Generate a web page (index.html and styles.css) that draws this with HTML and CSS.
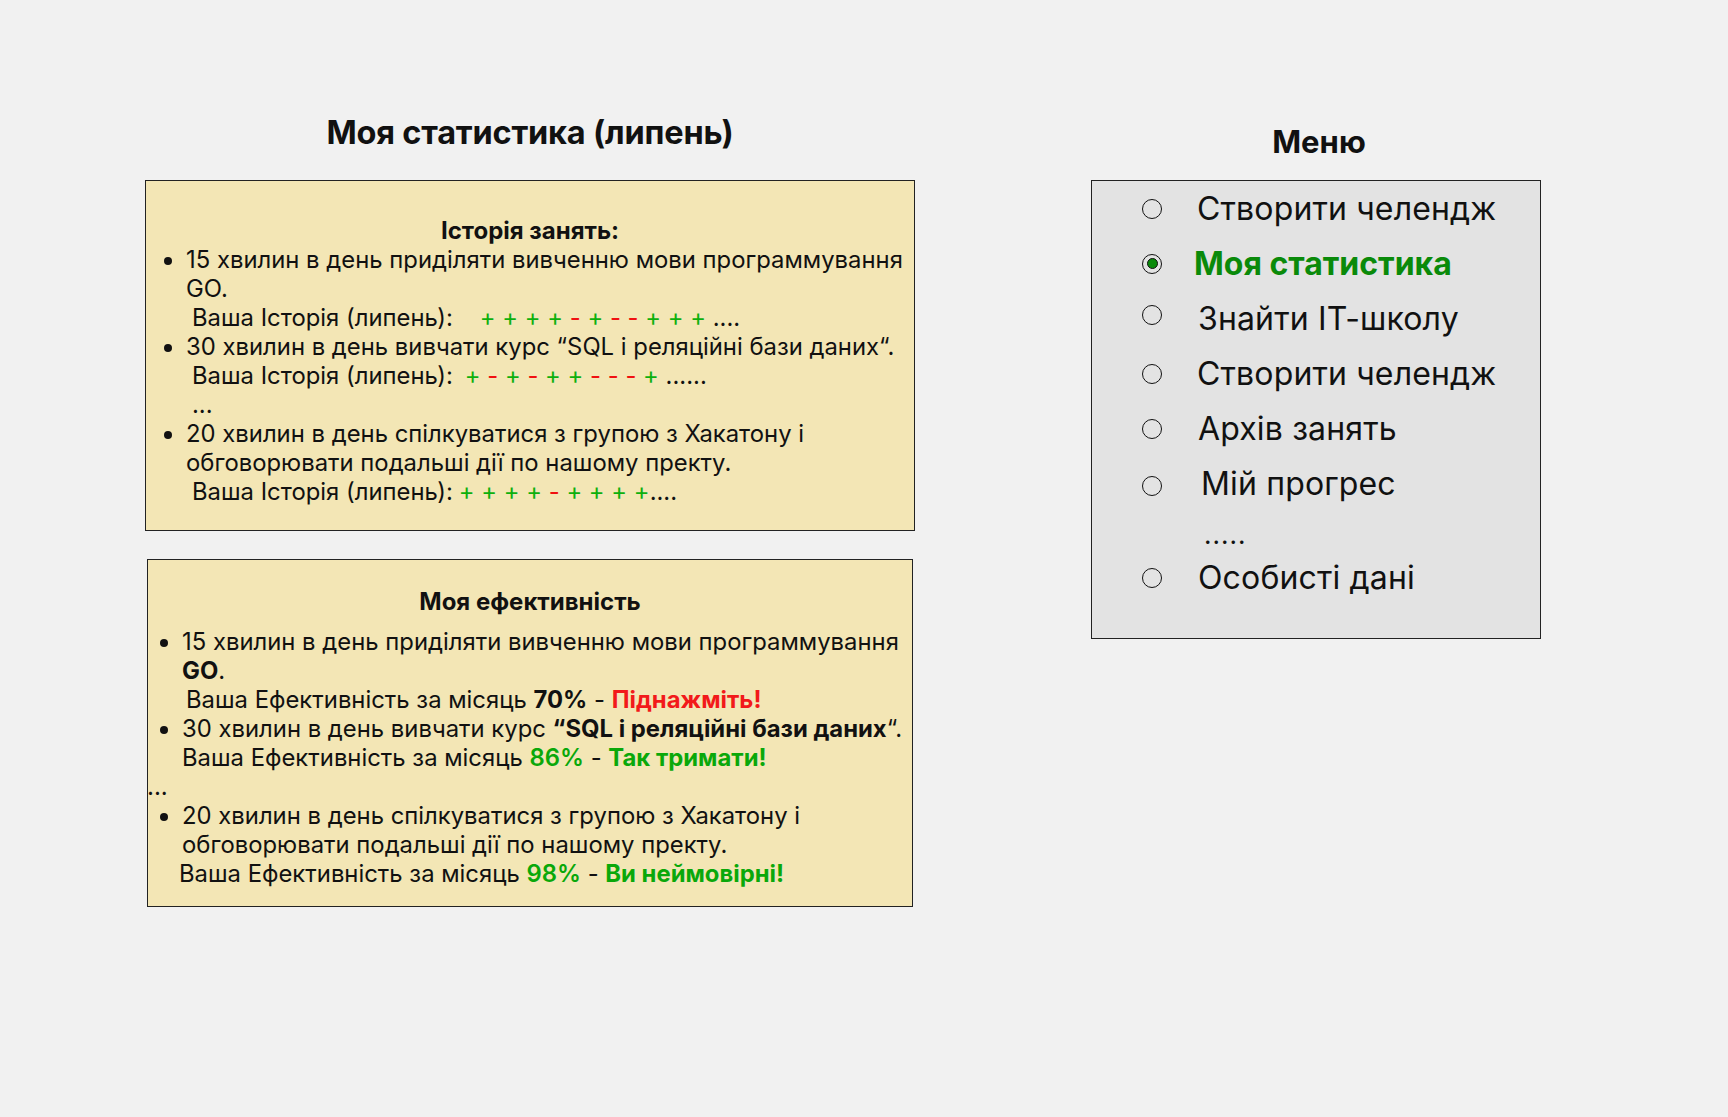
FILE: index.html
```html
<!DOCTYPE html>
<html lang="uk">
<head>
<meta charset="utf-8">
<title>Моя статистика</title>
<link rel="stylesheet" href="styles.css">
</head>
<body>
<div class="page">
  <section class="stats">
    <h1 class="title">Моя статистика (липень)</h1>
    <div class="card card-history">
      <h2 class="card-head">Історія занять:</h2>
      <ul class="list">
        <li>15 хвилин в день приділяти вивченню мови программування GO.
          <div class="sub sub-hist">Ваша Історія (липень):<span class="gap1"></span><span class="g">+ + + + </span><span class="r">- </span><span class="g">+ </span><span class="r">- - </span><span class="g">+ + + </span>....</div>
        </li>
        <li>30 хвилин в день вивчати курс “SQL і реляційні бази даних“.
          <div class="sub sub-hist">Ваша Історія (липень):<span class="gap2"></span><span class="g">+ </span><span class="r">- </span><span class="g">+ </span><span class="r">- </span><span class="g">+ + </span><span class="r">- - - </span><span class="g">+ </span>......</div>
          <div class="sub sub-hist">...</div>
        </li>
        <li>20 хвилин в день спілкуватися з групою з Хакатону і обговорювати подальші дії по нашому пректу.
          <div class="sub sub-hist">Ваша Історія (липень):<span class="gap3"></span><span class="g">+ + + + </span><span class="r">- </span><span class="g">+ + + +</span>....</div>
        </li>
      </ul>
    </div>

    <div class="card card-eff">
      <h2 class="card-head">Моя ефективність</h2>
      <ul class="list list-eff">
        <li>15 хвилин в день приділяти вивченню мови программування <b>GO</b>.
          <div class="sub sub-a">Ваша Ефективність за місяць <b>70%</b> - <b class="red">Піднажміть!</b></div>
        </li>
        <li>30 хвилин в день вивчати курс <b>“SQL і реляційні бази даних</b>“.
          <div class="sub">Ваша Ефективність за місяць <span class="pct">86%</span> - <b class="green">Так тримати!</b></div>
        </li>
      </ul>
      <div class="dots-out">...</div>
      <ul class="list list-eff">
        <li>20 хвилин в день спілкуватися з групою з Хакатону і обговорювати подальші дії по нашому пректу.
          <div class="sub sub-c">Ваша Ефективність за місяць <span class="pct">98%</span> - <b class="green">Ви неймовірні!</b></div>
        </li>
      </ul>
    </div>
  </section>

  <aside class="menu">
    <h2 class="menu-title">Меню</h2>
    <nav class="menu-box">
      <div class="item"><span class="radio"></span><span class="label">Створити челендж</span></div>
      <div class="item item-active"><span class="radio radio-on"></span><span class="label label-active">Моя статистика</span></div>
      <div class="item"><span class="radio radio-up"></span><span class="label label-s1">Знайти IT-школу</span></div>
      <div class="item"><span class="radio"></span><span class="label">Створити челендж</span></div>
      <div class="item"><span class="radio"></span><span class="label label-s1">Архів занять</span></div>
      <div class="item"><span class="radio radio-down"></span><span class="label label-s2">Мій прогрес</span></div>
      <div class="item item-dots"><span class="dots">.....</span></div>
      <div class="item"><span class="radio"></span><span class="label label-s1">Особисті дані</span></div>
    </nav>
  </aside>
</div>
</body>
</html>
```

FILE: styles.css
```css
* { box-sizing: border-box; }

html, body {
  margin: 0;
  padding: 0;
  background: #f1f1f1;
  color: #111;
  font-family: Inter, "Noto Sans", "Liberation Sans", sans-serif;
}

.page {
  display: flex;
  align-items: flex-start;
  padding: 0 0 0 145px;
  gap: 176px;
  min-height: 1117px;
}

/* left column */
.stats {
  width: 770px;
  display: flex;
  flex-direction: column;
}

.title {
  margin: 111px 0 0;
  font-size: 32.5px;
  font-weight: 700;
  line-height: 44px;
  text-align: center;
  letter-spacing: -0.2px;
}

.card {
  background: #f3e6b5;
  border: 1px solid #222;
}

.card-history {
  margin-top: 25px;
  height: 351px;
  padding: 35px 0 0;
}

.card-eff {
  margin: 28px 0 0 2px;
  width: 766px;
  height: 348px;
  padding: 27px 0 0;
}

.card-head {
  margin: 0;
  font-size: 24px;
  font-weight: 700;
  line-height: 29px;
  text-align: center;
}

.card-eff .card-head {
  margin-bottom: 11px;
}

.list {
  margin: 0;
  padding: 0 0 0 40px;
  font-size: 23.85px;
  line-height: 29px;
}

.list-eff {
  padding-left: 34px;
}

.sub {
  white-space: pre;
}

.sub-hist {
  padding-left: 6px;
}

.sub-a {
  padding-left: 4px;
}

.sub-c {
  margin-left: -3px;
}

.gap1 { display: inline-block; width: 27px; }
.gap2 { display: inline-block; width: 12px; }
.gap3 { display: inline-block; width: 6px; }

.g { color: #0db00d; }
.r { color: #f01010; }

.red { color: #f21a1a; }
.green { color: #0aa80a; }
.pct { color: #0aa80a; font-weight: 600; }

.dots-out {
  font-size: 24px;
  line-height: 29px;
  margin: 0 0 0 -1px;
}

/* menu */
.menu {
  width: 450px;
  display: flex;
  flex-direction: column;
}

.menu-title {
  margin: 121px 0 0;
  font-size: 31px;
  font-weight: 700;
  line-height: 42px;
  text-align: center;
  padding-left: 6px;
}

.menu-box {
  margin-top: 17px;
  height: 459px;
  background: #e3e3e3;
  border: 1px solid #222;
  padding: 0 0 0 50px;
  display: flex;
  flex-direction: column;
}

.item {
  display: flex;
  align-items: center;
  height: 55px;
  font-size: 32px;
}

.item-dots {
  height: 39px;
  padding-top: 8px;
}

.radio {
  width: 20px;
  height: 20px;
  border: 1.6px solid #111;
  border-radius: 50%;
  flex: none;
  display: flex;
  align-items: center;
  justify-content: center;
}

.radio-on::after {
  content: "";
  width: 9px;
  height: 9px;
  border-radius: 50%;
  background: #0a8a0a;
  border: 1.5px solid #111;
}

.radio-up { position: relative; top: -4px; }
.radio-down { position: relative; top: 2px; }

.label {
  margin-left: 35px;
  line-height: 40px;
  letter-spacing: 0.15px;
}

.label-active {
  margin-left: 32px;
  font-weight: 700;
  color: #0a8a0a;
  letter-spacing: 0;
}

.label-s1 { margin-left: 36px; }
.label-s2 { margin-left: 39px; }

.dots {
  margin-left: 62px;
  font-size: 26px;
  letter-spacing: 1px;
}
```
